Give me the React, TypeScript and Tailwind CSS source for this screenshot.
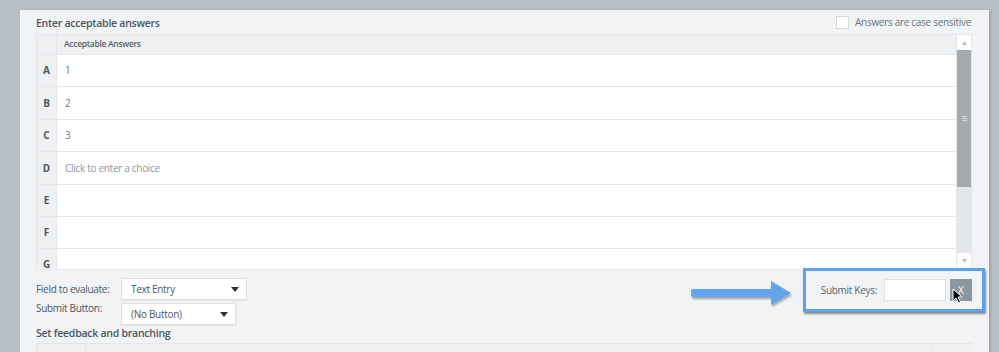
import React from "react";

const rows: { letter: string; text: string; h: string; placeholder?: boolean }[] = [
  { letter: "A", text: "1", h: "h-[32px]" },
  { letter: "B", text: "2", h: "h-[33px]" },
  { letter: "C", text: "3", h: "h-[32px]" },
  { letter: "D", text: "Click to enter a choice", h: "h-[33px]", placeholder: true },
  { letter: "E", text: "", h: "h-[32px]" },
  { letter: "F", text: "", h: "h-[32px]" },
  { letter: "G", text: "", h: "h-[32px]" },
];

function Caret() {
  return (
    <svg width="8" height="5" viewBox="0 0 8 5">
      <path d="M0 0 H8 L4 5 Z" fill="#333" />
    </svg>
  );
}

export default function App() {
  return (
    <div
      className="w-[999px] h-[352px] overflow-hidden bg-[#b8bfc6] flex pt-[10px] pl-[20px]"
      style={{ fontFamily: '"Open Sans", "Noto Sans", sans-serif' }}
    >
      <div className="w-[969px] h-[360px] bg-[#f2f3f5] shadow-[2px_0_2px_rgba(0,0,0,0.15)] pl-[16px] pr-[16px] flex flex-col shrink-0">
        {/* title row */}
        <div className="h-[24px] flex items-center justify-between pr-[2px]">
          <div className="text-[10.5px] font-semibold text-[#4b5661] tracking-[-0.25px] mt-[3px]">Enter acceptable answers</div>
          <div className="flex items-center gap-[6px]">
            <div className="w-[13px] h-[13px] bg-white border border-[#d5d9dd]" />
            <div className="text-[10px] text-[#6b747d] tracking-[-0.3px]">Answers are case sensitive</div>
          </div>
        </div>
        {/* table */}
        <div className="flex h-[235px] w-[936px]">
          <div className="flex-1 flex flex-col overflow-hidden border-l border-t border-[#e3e7eb]">
            <div className="flex h-[20px] shrink-0 bg-[#eef0f2] border-b border-[#e3e7eb]">
              <div className="w-[20px] border-r border-[#e3e7eb]" />
              <div className="pl-[7px] flex items-center text-[8.5px] font-semibold text-[#59626b] tracking-[-0.3px]">Acceptable Answers</div>
            </div>
            {rows.map((r) => (
              <div key={r.letter} className={`flex shrink-0 ${r.h} border-b border-[#e6e9ec]`}>
                <div className="w-[20px] bg-[#eef0f2] border-r border-[#e3e7eb] flex items-center justify-center text-[10px] font-bold text-[#4b5661]">
                  {r.letter}
                </div>
                <div className={`flex-1 bg-white pl-[8px] flex items-center text-[10px] tracking-[-0.3px] ${r.placeholder ? "text-[#8e96a0]" : "text-[#6d7680]"}`}>
                  {r.text}
                </div>
              </div>
            ))}
          </div>
          {/* scrollbar */}
          <div className="w-[16px] flex flex-col border border-[#e3e7eb] bg-[#e3e7eb]">
            <div className="h-[15px] bg-white flex items-center justify-center">
              <svg width="5" height="4" viewBox="0 0 5 4"><path d="M0 4 L2.5 0 L5 4 Z" fill="#b9bfc5" /></svg>
            </div>
            <div className="h-[137px] bg-[#a3abb1] flex items-center justify-center">
              <div className="flex flex-col gap-[1px]">
                <div className="w-[5px] h-px bg-[#d7dbde]" />
                <div className="w-[5px] h-px bg-[#d7dbde]" />
                <div className="w-[5px] h-px bg-[#d7dbde]" />
              </div>
            </div>
            <div className="flex-1" />
            <div className="h-[15px] bg-white flex items-center justify-center">
              <svg width="5" height="4" viewBox="0 0 5 4"><path d="M0 0 L5 0 L2.5 4 Z" fill="#b9bfc5" /></svg>
            </div>
          </div>
        </div>
        {/* form area */}
        <div className="flex h-[58px] border-t border-[#e8eaed]">
          <div className="flex flex-col pt-[8px] gap-[3px]">
            <div className="flex items-center">
              <div className="w-[85px] text-[10px] text-[#4b5661] tracking-[-0.3px]">Field to evaluate:</div>
              <div className="w-[126px] h-[22px] bg-white border border-[#dde1e5] shadow-[0_1px_1px_rgba(0,0,0,0.06)] flex items-center justify-between pl-[9px] pr-[7px] text-[10px] text-[#4b5661] tracking-[-0.3px]">
                <span>Text Entry</span>
                <Caret />
              </div>
            </div>
            <div className="flex items-start">
              <div className="w-[85px] text-[10px] text-[#4b5661] -mt-[2px] tracking-[-0.3px]">Submit Button:</div>
              <div className="w-[115px] h-[22px] bg-white border border-[#dde1e5] shadow-[0_1px_1px_rgba(0,0,0,0.06)] flex items-center justify-between pl-[9px] pr-[7px] text-[10px] text-[#4b5661] tracking-[-0.3px]">
                <span>(No Button)</span>
                <Caret />
              </div>
            </div>
          </div>
          <div className="ml-auto flex items-start mr-[-12px] -mt-[2px]">
            <svg width="104" height="40" viewBox="0 0 104 40" className="mt-[3px] mr-[8px]">
              <defs>
                <filter id="sh" x="-10%" y="-30%" width="130%" height="180%">
                  <feDropShadow dx="1" dy="2" stdDeviation="1" floodColor="#000" floodOpacity="0.35" />
                </filter>
              </defs>
              <g filter="url(#sh)">
                <path d="M3 18 H80 V10 L100 22 L80 34 V26 H3 A4 4 0 0 1 3 18 Z" fill="#63a4ec" />
              </g>
            </svg>
            <div className="w-[182px] h-[44px] border-[3px] border-[#5fa0ec] shadow-[1px_2px_2px_rgba(0,0,0,0.45)] flex items-center justify-end pr-[10px] relative">
              <div className="text-[10px] text-[#5b646d] mr-[7px] tracking-[-0.3px]">Submit Keys:</div>
              <div className="w-[62px] h-[22px] bg-white border border-[#dde1e5]" />
              <div className="w-[22px] h-[22px] bg-[#8c969e] ml-[4px] flex items-center justify-center text-[10px] text-white">X</div>
              <svg width="11" height="16" viewBox="0 0 11 16" className="absolute left-[146px] top-[17px]">
                <path d="M1 1 L1 13 L4 10 L6.5 15 L8.5 14 L6 9 L10 9 Z" fill="#000" stroke="#fff" strokeWidth="1" />
              </svg>
            </div>
          </div>
        </div>
        <div className="h-[18px] flex items-center text-[10.5px] font-semibold text-[#4b5661] -mt-[2px] tracking-[-0.25px]">Set feedback and branching</div>
        <div className="flex h-[20px] border-t border-l border-[#e3e7eb] bg-[#eef0f2] w-[936px]">
          <div className="w-[49px] border-r border-[#e3e7eb]" />
          <div className="flex-1" />
          <div className="w-[40px] border-l border-[#e3e7eb]" />
        </div>
      </div>
    </div>
  );
}
